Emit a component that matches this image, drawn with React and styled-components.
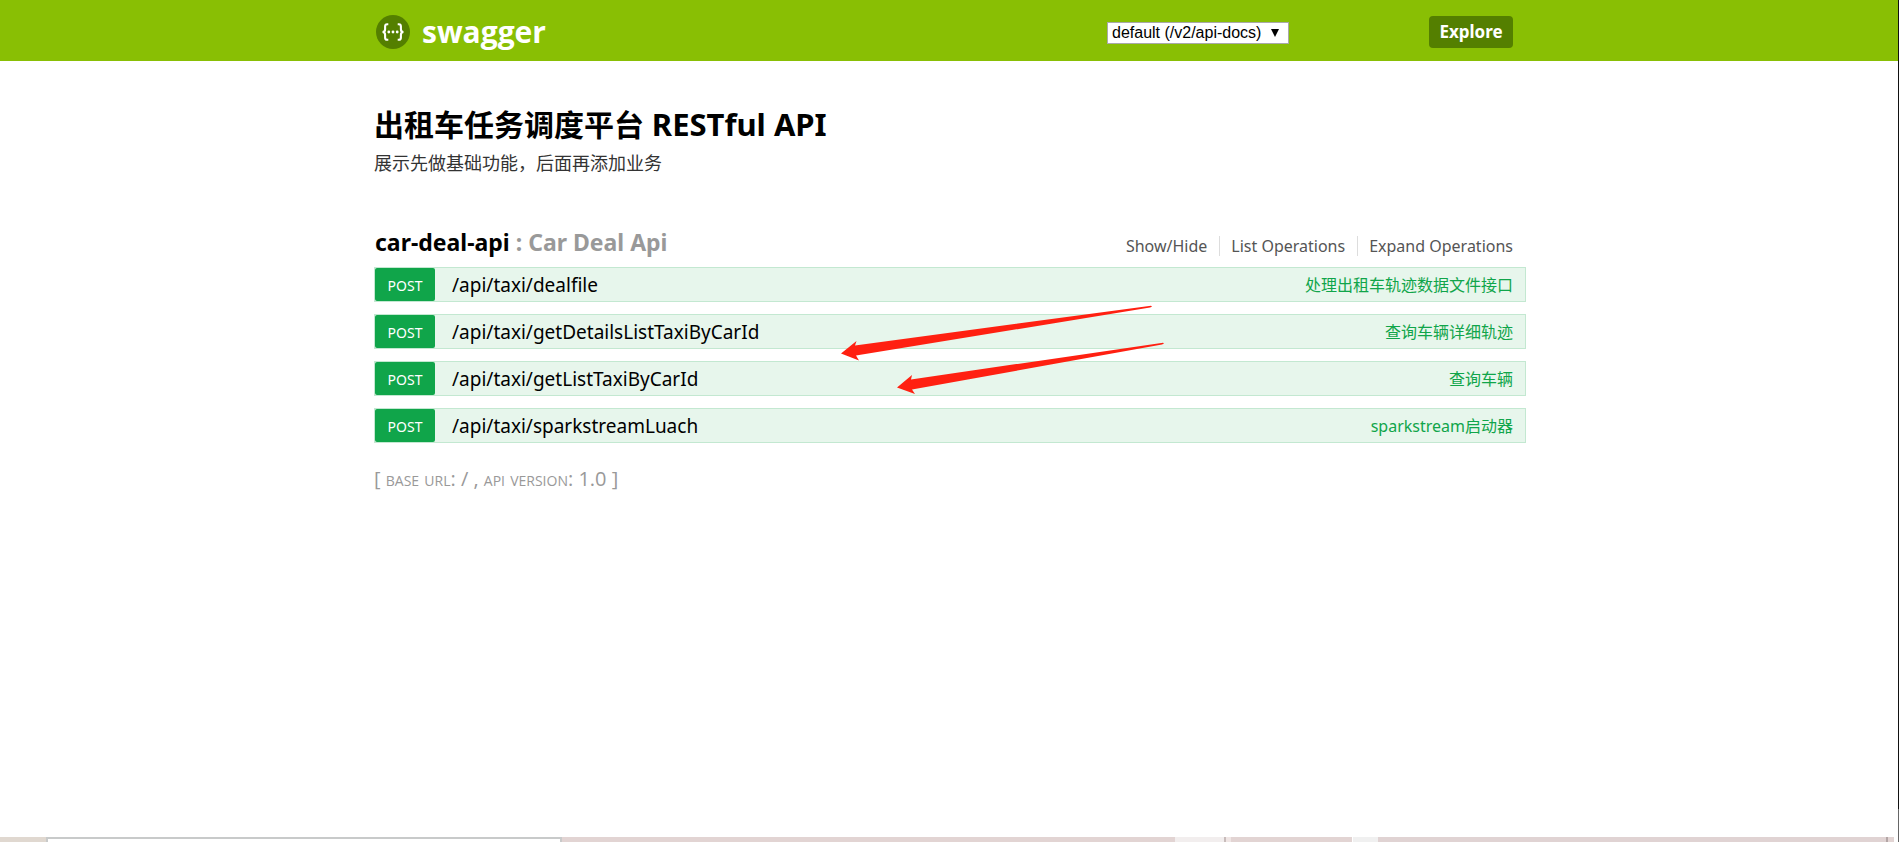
import React from "react";
import styled, { createGlobalStyle } from "styled-components";

const GlobalStyle = createGlobalStyle`
  * { box-sizing: border-box; }
  body {
    margin: 0;
    background: #fff;
    font-family: "Noto Sans", "Noto Sans CJK SC", sans-serif;
    color: #000;
  }
`;

const Page = styled.div`
  display: flex;
  flex-direction: column;
  min-height: 100vh;
  border-right: 1px solid;
  border-image: linear-gradient(#111 96%, #666 96%) 1;
`;

const Header = styled.header`
  background: #89bf04;
  height: 61px;
  display: flex;
`;

const Container = styled.div`
  width: 100%;
  max-width: 1154px;
  margin: 0 auto;
  padding-left: 2px;
`;

const HeaderInner = styled(Container)`
  display: flex;
  align-items: center;
  justify-content: space-between;
  padding: 3px 13px 0 4px;
`;

const Logo = styled.a`
  display: flex;
  align-items: center;
  gap: 12px;
  color: #fff;
  text-decoration: none;
  font-size: 30px;
  line-height: 36px;
  font-weight: 700;
  font-family: "Open Sans", sans-serif;
`;

const ApiForm = styled.form`
  display: flex;
  align-items: center;
  gap: 140px;
`;

const SpecSelect = styled.select`
  appearance: none;
  grid-area: 1 / 1;
  width: 182px;
  height: 22px;
  padding: 0 4px;
  border: 1px solid #a9a9a9;
  border-radius: 0;
  background: #fff;
  color: #000;
  font: 16px/20px "Liberation Sans", sans-serif;
`;

const SelectWrap = styled.label`
  display: grid;
  align-items: center;
  justify-items: end;
  padding-top: 2px;

  svg {
    grid-area: 1 / 1;
    margin-right: 10px;
    pointer-events: none;
  }
`;

const ExploreButton = styled.button`
  width: 84px;
  height: 32px;
  padding: 0;
  border: 0;
  border-radius: 4px;
  background: #547f00;
  color: #fff;
  font: 700 17px/32px "Noto Sans", sans-serif;
`;

const Main = styled(Container).attrs({ as: "main" })`
  flex: 1;
`;

const Title = styled.h1`
  margin: 43px 0 0;
  font-size: 30px;
  line-height: 40px;
  font-weight: 700;

  span {
    font-size: 31px;
  }
`;

const Description = styled.p`
  margin: 5px 0 0;
  color: #333;
  font-size: 18px;
  line-height: 26px;
`;

const ResourceHeading = styled.div`
  display: flex;
  justify-content: space-between;
  align-items: center;
  margin-top: 50px;
  padding: 0 13px 0 1px;
`;

const ResourceName = styled.h2`
  margin: 0;
  color: #999;
  font-size: 23px;
  line-height: 32px;
  font-weight: 700;

  a {
    color: #000;
    text-decoration: none;
  }
`;

const Options = styled.ul`
  display: flex;
  margin: 8px 0 0;
  padding: 0;
  list-style: none;
`;

const Option = styled.li`
  line-height: 20px;

  & + & {
    margin-left: 12px;
    padding-left: 11px;
    border-left: 1px solid #ddd;
  }

  a {
    color: #555;
    font-size: 16px;
    text-decoration: none;
  }
`;

const Operations = styled.ul`
  display: flex;
  flex-direction: column;
  gap: 12px;
  margin: 9px 0 0;
  padding: 0;
  list-style: none;
  position: relative;
`;

const Operation = styled.li`
  display: flex;
  align-items: center;
  height: 35px;
  padding-right: 12px;
  border: 1px solid #c3e8d1;
  background: #e7f6ec;
`;

const Method = styled.a`
  width: 60px;
  height: 33px;
  padding-top: 2px;
  border-radius: 2px;
  background: #10a54a;
  color: #fff;
  font-size: 14px;
  line-height: 32px;
  text-align: center;
  text-decoration: none;
`;

const Path = styled.a`
  flex: 1;
  padding-left: 17px;
  color: #000;
  font-size: 19px;
  line-height: 32px;
  text-decoration: none;
`;

const Summary = styled.a`
  color: #10a54a;
  font-size: 16px;
  line-height: 32px;
  text-decoration: none;
`;

const ArrowLayer = styled.li`
  position: absolute;
  top: 36px;
  left: 466px;
  pointer-events: none;
`;

const Footer = styled.footer`
  margin-top: 22px;
  color: #999;
  font-family: "Open Sans", sans-serif;
  font-size: 20px;
  line-height: 28px;
  font-variant: small-caps;
`;

const Taskbar = styled.div`
  display: flex;
  height: 5px;
  background: #e2d4d3;
`;

const Segment = styled.span`
  flex: ${(p) => p.$w} 0 0;
  background: ${(p) => p.$color};
`;

const SearchField = styled.span`
  flex: 512 0 0;
  border: 2px solid #c8caca;
  border-bottom: 0;
  background: #fff;
`;

const operations = [
  { path: "/api/taxi/dealfile", summary: "处理出租车轨迹数据文件接口" },
  { path: "/api/taxi/getDetailsListTaxiByCarId", summary: "查询车辆详细轨迹" },
  { path: "/api/taxi/getListTaxiByCarId", summary: "查询车辆" },
  { path: "/api/taxi/sparkstreamLuach", summary: "sparkstream启动器" },
];

const segments = [
  [613, "#e2d4d3"], [49, "#f2eeee"], [2, "#c8bcbb"], [5, "#f0e6e5"],
  [121, "#e2d4d3"], [1, "#ffffff"], [25, "#f0f0f0"], [508, "#e0d3d3"],
  [2, "#b3a6a6"], [6, "#e2d4d3"], [4, "#ffffff"],
];

function SwaggerMark() {
  return (
    <svg width="34" height="34" viewBox="0 0 34 34" aria-hidden="true">
      <circle cx="17" cy="17" r="17" fill="#547f00" />
      <g fill="none" stroke="#fff" strokeWidth="2.1">
        <path d="M12.300 9.200h-1.200q-2 0-2 2.300v2.700q0 2.800-2.600 2.800q2.600 0 2.600 2.800v2.700q0 2.300 2 2.300h1.200" />
        <path d="M21.700 9.200h1.200q2 0 2 2.300v2.700q0 2.800 2.600 2.800q-2.600 0-2.600 2.800v2.700q0 2.300-2 2.300h-1.200" />
      </g>
      <g fill="#fff">
        <circle cx="12.800" cy="17" r="1.400" />
        <circle cx="17" cy="17" r="1.400" />
        <circle cx="21.200" cy="17" r="1.400" />
      </g>
    </svg>
  );
}

export default function App() {
  return (
    <>
      <GlobalStyle />
      <Page>
        <Header>
          <HeaderInner>
            <Logo href="#">
              <SwaggerMark />
              swagger
            </Logo>
            <ApiForm onSubmit={(e) => e.preventDefault()}>
              <SelectWrap>
                <SpecSelect aria-label="API specification">
                  <option>default (/v2/api-docs)</option>
                </SpecSelect>
                <svg width="8" height="8" viewBox="0 0 8 8" aria-hidden="true">
                  <path d="M0 0h8L4 8z" fill="#000" />
                </svg>
              </SelectWrap>
              <ExploreButton type="submit">Explore</ExploreButton>
            </ApiForm>
          </HeaderInner>
        </Header>

        <Main>
          <Title>出租车任务调度平台 <span>RESTful API</span></Title>
          <Description>展示先做基础功能，后面再添加业务</Description>

          <ResourceHeading>
            <ResourceName>
              <a href="#car-deal-api">car-deal-api</a> : Car Deal Api
            </ResourceName>
            <Options>
              <Option><a href="#toggle">Show/Hide</a></Option>
              <Option><a href="#list">List Operations</a></Option>
              <Option><a href="#expand">Expand Operations</a></Option>
            </Options>
          </ResourceHeading>

          <Operations>
            {operations.map((op) => (
              <Operation key={op.path}>
                <Method href={"#" + op.path}>POST</Method>
                <Path href={"#" + op.path}>{op.path}</Path>
                <Summary href={"#" + op.path}>{op.summary}</Summary>
              </Operation>
            ))}
            <ArrowLayer aria-hidden="true">
              <svg width="330" height="94" viewBox="0 0 330 94">
                <g fill="#ff2011">
                  <path d="M1 50.5L16.500 38L15 42.500L311 2.700L312 3.700L310 4.500L16 52.500L19 57.500z" />
                  <path d="M57 84.500L72 72L71 76.500L323 39.700L324 40.500L322 41.500L72 86.500L75 91z" />
                </g>
              </svg>
            </ArrowLayer>
          </Operations>

          <Footer>[ base url: / , api version: 1.0 ]</Footer>
        </Main>

        <Taskbar>
          <Segment $w={46} $color="#e0d8d0" />
          <SearchField />
          {segments.map(([w, color], i) => (
            <Segment key={i} $w={w} $color={color} />
          ))}
        </Taskbar>
      </Page>
    </>
  );
}
